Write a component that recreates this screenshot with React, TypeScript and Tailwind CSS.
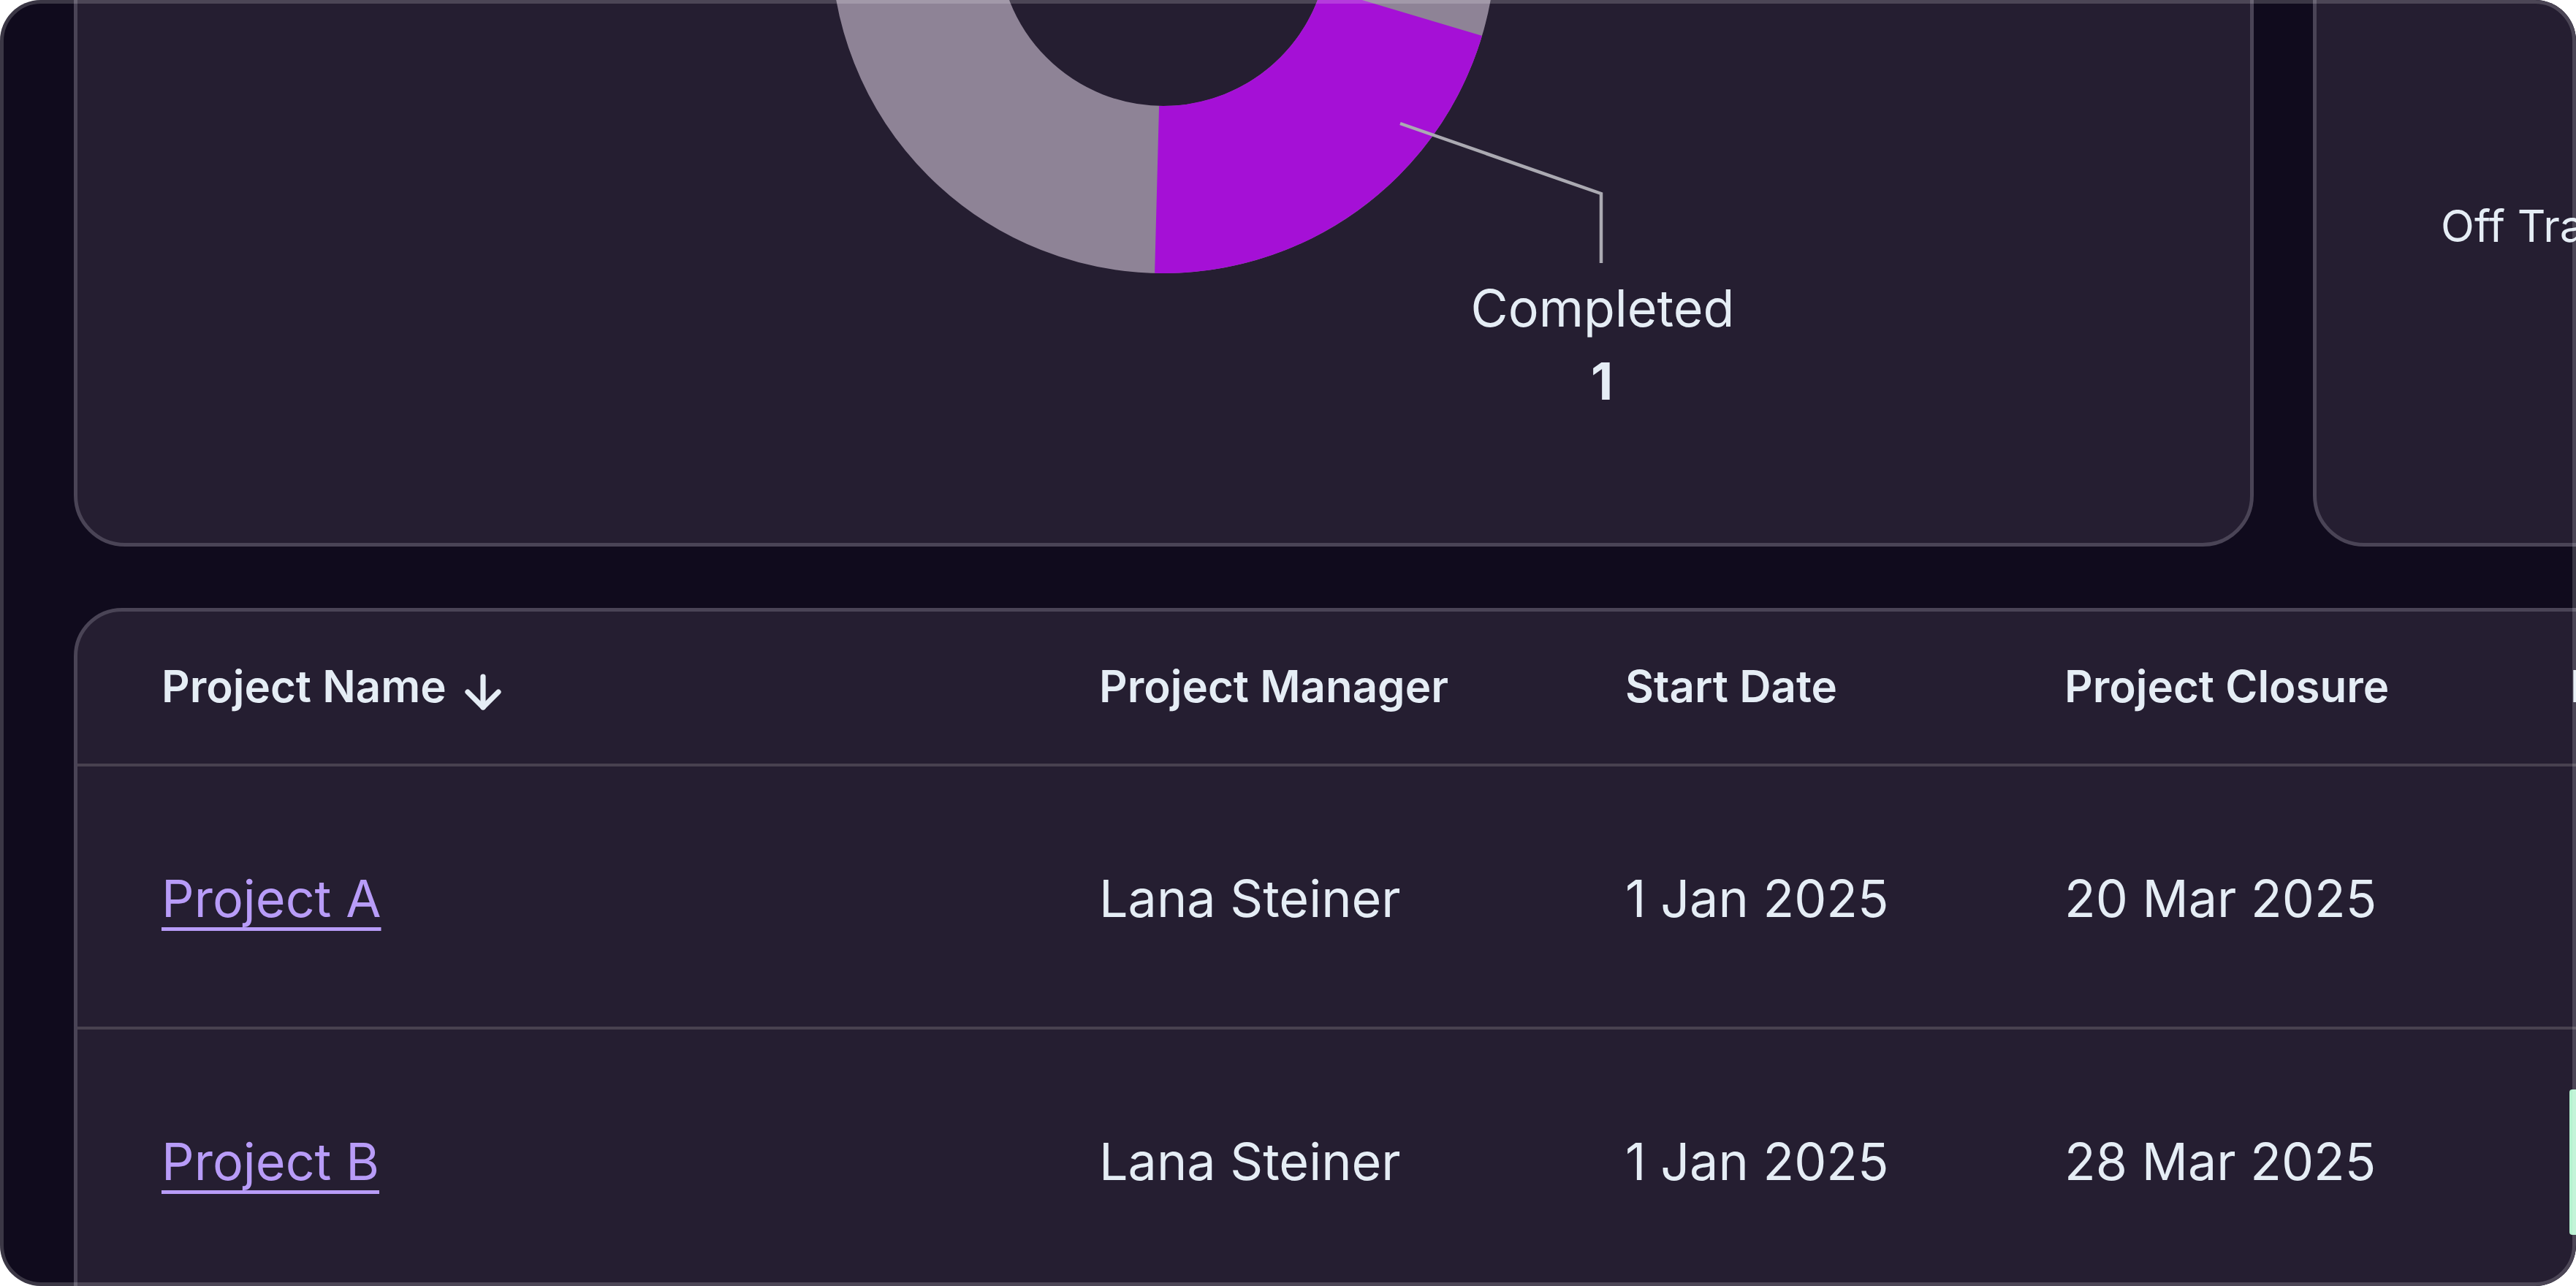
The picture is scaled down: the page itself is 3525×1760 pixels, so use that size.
import { ArrowDown } from 'lucide-react';

type Row = {
  name: string;
  manager: string;
  start: string;
  closure: string;
  status: string | null;
};

const ROWS: Row[] = [
  { name: 'Project A', manager: 'Lana Steiner', start: '1 Jan 2025', closure: '20 Mar 2025', status: null },
  { name: 'Project B', manager: 'Lana Steiner', start: '1 Jan 2025', closure: '28 Mar 2025', status: 'On Track' },
];

// donut geometry, in page pixels
const CX = 1591;
const CY = -82;
const R_OUT = 455;
const R_IN = 226;

function sector(a0: number, a1: number) {
  const rad = (a: number) => (a * Math.PI) / 180;
  const pt = (r: number, a: number) => `${CX + r * Math.cos(rad(a))} ${CY + r * Math.sin(rad(a))}`;
  const large = a1 - a0 > 180 ? 1 : 0;
  return [
    `M ${pt(R_OUT, a0)}`,
    `A ${R_OUT} ${R_OUT} 0 ${large} 1 ${pt(R_OUT, a1)}`,
    `L ${pt(R_IN, a1)}`,
    `A ${R_IN} ${R_IN} 0 ${large} 0 ${pt(R_IN, a0)}`,
    'Z',
  ].join(' ');
}

function StatusChart() {
  return (
    <svg className="block h-full w-full">
      <g transform="translate(-105 696)">
        <circle
          cx={CX}
          cy={CY}
          r={(R_OUT + R_IN) / 2}
          fill="none"
          stroke="#8e8396"
          strokeWidth={R_OUT - R_IN}
        />
        <path d={sector(16.6, 91.5)} fill="#a510d6" />
        <polyline
          points="1915,168 2190,264 2190,359"
          fill="none"
          stroke="#abaab2"
          strokeWidth={4.5}
        />
        <text
          x={2192}
          y={446}
          textAnchor="middle"
          fontFamily="Inter, sans-serif"
          fontSize={70}
          fill="#e5edf5"
        >
          Completed
        </text>
        <text
          x={2191}
          y={546}
          textAnchor="middle"
          fontFamily="Inter, sans-serif"
          fontSize={70}
          fontWeight={700}
          fill="#e5edf5"
        >
          1
        </text>
      </g>
    </svg>
  );
}

function TrackChart() {
  return (
    <svg className="block h-full w-full">
      <g transform="translate(-3169 696)">
        <text x={3339} y={330} fontFamily="Inter, sans-serif" fontSize={60} fill="#e5edf5">
          Off Track
        </text>
      </g>
    </svg>
  );
}

const COLS = 'grid grid-cols-[1283px_720px_601px_692px_600px] pl-[115px]';

export default function App() {
  return (
    <div className="relative h-[1760px] w-[3525px] overflow-hidden rounded-[56px] bg-[#100b1d] font-['Inter',sans-serif] text-[#e5edf5]">
      <div className="-mt-[700px] flex flex-col gap-[84px] pl-[101px]">
        {/* chart cards */}
        <div className="flex h-[1448px] gap-[81px]">
          <div className="w-[2983px] shrink-0 overflow-hidden rounded-[70px] border-[5px] border-[#4a4456] bg-[#251e31]">
            <StatusChart />
          </div>
          <div className="w-[1000px] shrink-0 overflow-hidden rounded-[70px] border-[5px] border-[#4a4456] bg-[#251e31]">
            <TrackChart />
          </div>
        </div>

        {/* projects table */}
        <div className="h-[1200px] w-[3800px] shrink-0 overflow-hidden rounded-[66px] border-[5px] border-[#4a4456] bg-[#251e31]">
          <div className={`${COLS} h-[212px] items-center border-b-4 border-[#48414f] pb-[4px] text-[60px] font-semibold leading-none`}>
            <div className="flex items-center gap-[14px]">
              <span>Project Name</span>
              <ArrowDown size={72} strokeWidth={2.4} className="mt-[16px]" />
            </div>
            <div>Project Manager</div>
            <div>Start Date</div>
            <div>Project Closure</div>
            <div className="whitespace-nowrap">RAG Status</div>
          </div>

          {ROWS.map((row) => (
            <div
              key={row.name}
              className={`${COLS} h-[360px] items-center border-b-4 border-[#48414f] pt-[6px] text-[70px] leading-none`}
            >
              <div>
                <a
                  href="#"
                  className="text-[#b89cf8] underline decoration-[5px] underline-offset-[14px]"
                >
                  {row.name}
                </a>
              </div>
              <div>{row.manager}</div>
              <div>{row.start}</div>
              <div>{row.closure}</div>
              <div>
                {row.status && (
                  <div className="-ml-[1px] flex h-[199px] w-[420px] items-center rounded-[4px] bg-[#b5f2d0] pl-[40px] whitespace-nowrap text-[#0b5c33]">
                    {row.status}
                  </div>
                )}
              </div>
            </div>
          ))}
        </div>
      </div>

      {/* frame edge */}
      <div className="pointer-events-none absolute inset-0 rounded-[56px] border-[5px] border-white/[0.18]" />
    </div>
  );
}
